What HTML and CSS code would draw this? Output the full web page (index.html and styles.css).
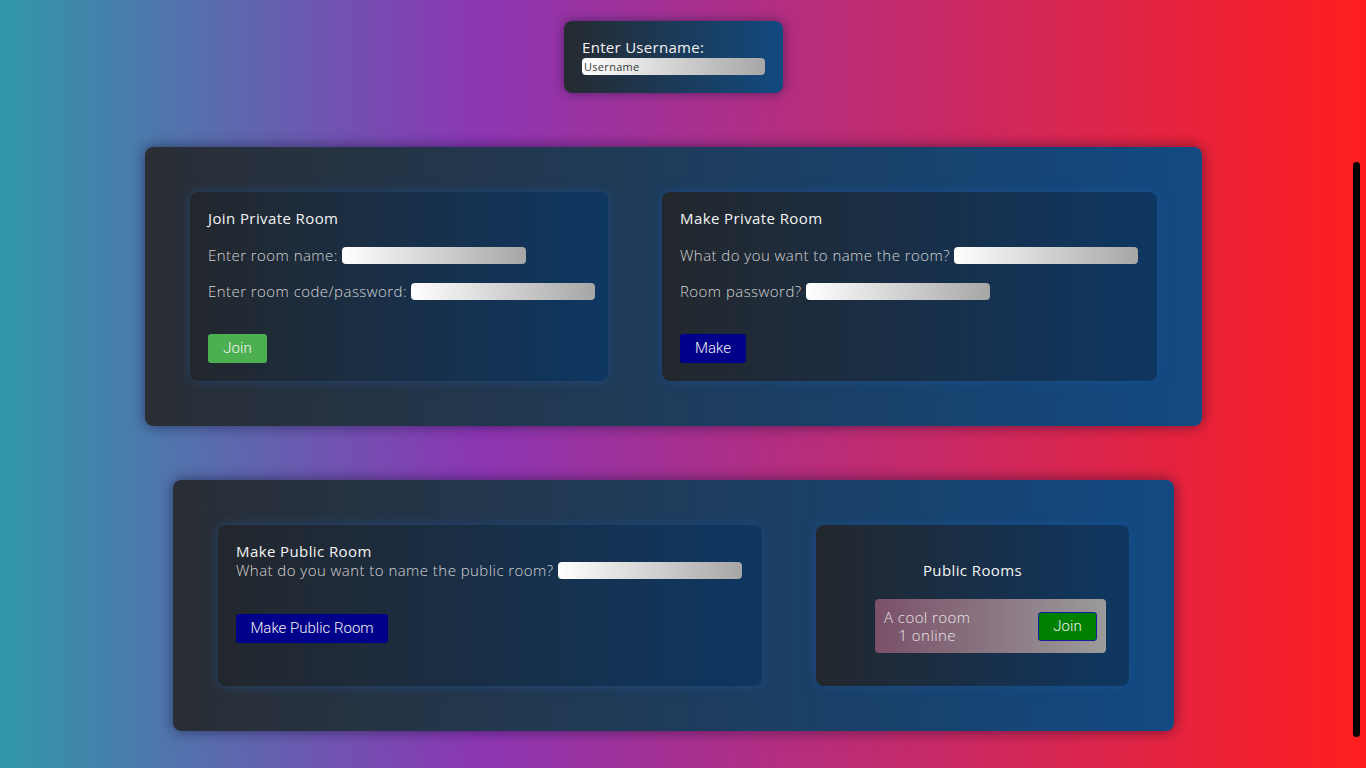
FILE: index.html
```html
<!DOCTYPE html>
<html lang="en">
<head>
<meta charset="utf-8">
<title>Rooms</title>
<link rel="stylesheet" href="styles.css">
</head>
<body>
<div class="page">
  <div class="user-card">
    <label class="user-label" for="username">Enter Username:</label>
    <input id="username" class="field field-user" type="text" placeholder="Username">
  </div>

  <section class="panel panel-private">
    <div class="card card-join">
      <h3 class="card-title">Join Private Room</h3>
      <p class="row row-first">Enter room name: <input class="field" type="text"></p>
      <p class="row">Enter room code/password: <input class="field" type="text"></p>
      <button class="btn btn-green">Join</button>
    </div>
    <div class="card card-make">
      <h3 class="card-title">Make Private Room</h3>
      <p class="row row-first">What do you want to name the room? <input class="field" type="text"></p>
      <p class="row">Room password? <input class="field" type="text"></p>
      <button class="btn btn-blue">Make</button>
    </div>
  </section>

  <section class="panel panel-public">
    <div class="card card-public-make">
      <h3 class="card-title">Make Public Room</h3>
      <p class="row row-tight">What do you want to name the public room? <input class="field" type="text"></p>
      <button class="btn btn-blue btn-public">Make Public Room</button>
    </div>
    <div class="card card-list">
      <h3 class="card-title list-title">Public Rooms</h3>
      <div class="room">
        <div class="room-info">
          <div>A cool room</div>
          <div>1 online</div>
        </div>
        <button class="btn btn-join">Join</button>
      </div>
    </div>
  </section>
</div>
<div class="scroll-thumb"></div>
</body>
</html>
```

FILE: styles.css
```css
html, body {
  margin: 0;
  padding: 0;
  height: 100%;
}

body {
  background: linear-gradient(90deg, #3097a9 0%, #8c36b4 35%, #ff1e1e 100%);
  font-family: "Open Sans", "Noto Sans", sans-serif;
  color: #e8e8e8;
  overflow: hidden;
}

.page {
  width: 1347px;
  padding-top: 21px;
  display: flex;
  flex-direction: column;
  align-items: center;
}

.user-card {
  width: 219px;
  height: 72px;
  box-sizing: border-box;
  padding: 17px 18px 0;
  border-radius: 8px;
  background: linear-gradient(90deg, #262a30, #114a80);
  box-shadow: 0 0 12px rgba(20, 20, 60, 0.55);
  display: flex;
  flex-direction: column;
  align-items: flex-start;
}

.user-label {
  font-size: 15px;
  line-height: 18px;
  font-weight: 400;
  letter-spacing: 0.3px;
  color: #f2f2f2;
  margin-bottom: 2px;
}

.field {
  flex: none;
  width: 184px;
  height: 17px;
  box-sizing: border-box;
  border: none;
  border-radius: 4px;
  background: linear-gradient(90deg, #ffffff, #a6a6a6);
  padding: 0 2px;
  margin: 0;
  outline: none;
  font-family: "Open Sans", sans-serif;
}

.field-user {
  width: 183px;
  font-size: 11px;
  color: #333;
  letter-spacing: 0.3px;
}

.field-user::placeholder {
  color: #3a3a3a;
}

.panel {
  box-sizing: border-box;
  padding: 45px;
  border-radius: 8px;
  background: linear-gradient(90deg, #2a2e35, #124a82);
  box-shadow: 0 0 14px rgba(10, 10, 40, 0.55);
  display: flex;
  gap: 54px;
  margin-top: 54px;
}

.panel-private {
  width: 1057px;
}

.panel-public {
  width: 1001px;
}

.card {
  box-sizing: border-box;
  border-radius: 8px;
  background: linear-gradient(90deg, #23272d, #0e3762);
  box-shadow: 0 0 12px rgba(30, 90, 170, 0.45);
  padding: 17px 18px 18px;
}

.card-join { width: 418px; height: 189px; }
.card-make { width: 495px; height: 189px; }
.card-public-make { width: 544px; height: 161px; }
.card-list { width: 313px; height: 161px; padding: 36px 23px 0 0; }

.card-title {
  margin: 0;
  font-size: 15px;
  line-height: 18px;
  font-weight: 400;
  letter-spacing: 0.4px;
  color: #f4f4f4;
}

.list-title {
  text-align: center;
  padding-left: 23px;
}

.row {
  display: flex;
  align-items: center;
  height: 18px;
  margin: 18px 0 0;
  font-size: 15px;
  line-height: 18px;
  font-weight: 300;
  letter-spacing: 0.45px;
  color: #d4d4d4;
  white-space: pre;
}

.row-first { margin-top: 19px; }
.row-tight { margin-top: 1px; }

.btn {
  display: block;
  height: 29px;
  border: none;
  border-radius: 3px;
  font-family: "Roboto", sans-serif;
  font-size: 15px;
  font-weight: 300;
  color: #f2f2f2;
  padding: 0 0 1px;
  margin-top: 34px;
}

.btn-green {
  width: 59px;
  background: #4caf50;
}

.btn-blue {
  width: 66px;
  background: #00008b;
}

.btn-public {
  width: 152px;
  margin-top: 35px;
}

.room {
  margin: 20px 0 0 59px;
  width: 231px;
  height: 54px;
  box-sizing: border-box;
  padding: 0 9px;
  border-radius: 4px;
  background: linear-gradient(90deg, #7a5068, #9b9b9b);
  display: flex;
  align-items: center;
  justify-content: space-between;
}

.room-info {
  text-align: center;
  font-size: 15px;
  line-height: 18px;
  font-weight: 300;
  letter-spacing: 0.45px;
  color: #e6e6e6;
}

.btn-join {
  margin: 1px 0 0;
  width: 59px;
  background: #008000;
  border: 1px solid #1a1aa0;
}

.scroll-thumb {
  position: fixed;
  left: 1353px;
  top: 162px;
  width: 7px;
  height: 575px;
  border-radius: 4px;
  background: #000;
}
```
